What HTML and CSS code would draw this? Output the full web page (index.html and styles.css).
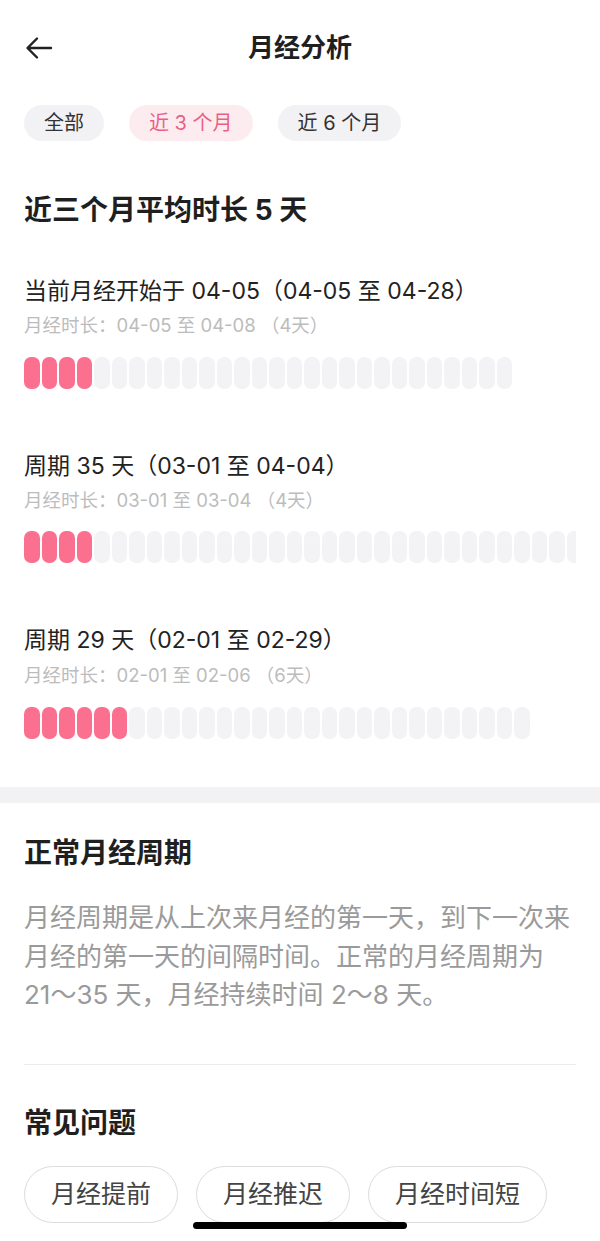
FILE: index.html
```html
<!DOCTYPE html>
<html lang="zh-CN">
<head>
<meta charset="utf-8">
<title>月经分析</title>
<link rel="stylesheet" href="styles.css">
</head>
<body>
<div class="page">
  <header class="topbar">
    <svg class="back" width="28" height="24" viewBox="0 0 28 24" aria-hidden="true">
      <path d="M26 12H3 M12 2.5L2.5 12L12 21.5" fill="none" stroke="#222" stroke-width="2.4" stroke-linecap="round" stroke-linejoin="round"/>
    </svg>
    <h1 class="title">月经分析</h1>
  </header>

  <div class="filters">
    <span class="filter">全部</span>
    <span class="filter active">近 3 个月</span>
    <span class="filter">近 6 个月</span>
  </div>

  <h2 class="avg">近三个月平均时长 5 天</h2>

  <section class="cycle">
    <div class="cycle-title">当前月经开始于 04-05（04-05 至 04-28）</div>
    <div class="cycle-sub">月经时长：04-05 至 04-08 （4天）</div>
    <div class="bars" data-total="28" data-on="4"></div>
  </section>

  <section class="cycle">
    <div class="cycle-title">周期 35 天（03-01 至 04-04）</div>
    <div class="cycle-sub">月经时长：03-01 至 03-04 （4天）</div>
    <div class="bars" data-total="35" data-on="4"></div>
  </section>

  <section class="cycle">
    <div class="cycle-title">周期 29 天（02-01 至 02-29）</div>
    <div class="cycle-sub">月经时长：02-01 至 02-06 （6天）</div>
    <div class="bars" data-total="29" data-on="6"></div>
  </section>
</div>

<div class="band"></div>

<div class="page">
  <h2 class="sec-title first">正常月经周期</h2>
  <p class="desc">月经周期是从上次来月经的第一天，到下一次来月经的第一天的间隔时间。正常的月经周期为 21～35 天，月经持续时间 2～8 天。</p>
  <div class="rule"></div>
  <h2 class="sec-title">常见问题</h2>
  <div class="questions">
    <span class="q">月经提前</span>
    <span class="q">月经推迟</span>
    <span class="q">月经时间短</span>
  </div>
</div>

<div class="home-indicator"></div>

<script src="app.js"></script>
</body>
</html>
```

FILE: styles.css
```css
* { box-sizing: border-box; margin: 0; padding: 0; }

html, body {
  background: #fff;
}

body {
  font-family: "Inter", "Noto Sans CJK SC", sans-serif;
  color: #222;
  width: 600px;
  height: 1241px;
  overflow: hidden;
}

.page {
  padding: 0 24px;
}

.topbar {
  position: relative;
  height: 96px;
  display: flex;
  align-items: center;
  justify-content: center;
}

.back {
  position: absolute;
  left: 1px;
  top: 36px;
}

.title {
  font-size: 26px;
  font-weight: 700;
  line-height: 36px;
  color: #1f1f1f;
}

.filters {
  display: flex;
  gap: 25px;
  margin-top: 9px;
}

.filter {
  height: 36px;
  line-height: 36px;
  padding: 0 20px;
  border-radius: 18px;
  background: #f2f2f4;
  font-size: 20px;
  color: #333;
  white-space: nowrap;
}

.filter.active {
  background: #fdecef;
  color: #ea5f86;
}

.avg {
  margin-top: 51px;
  font-size: 28px;
  line-height: 36px;
  font-weight: 700;
  color: #1f1f1f;
}

.cycle {
  margin-top: 47px;
}

.cycle + .cycle {
  margin-top: 61px;
}

.cycle-title {
  font-size: 23px;
  line-height: 32px;
  color: #222;
  white-space: nowrap;
}

.cycle-sub {
  margin-top: 7px;
  font-size: 18.5px;
  line-height: 22px;
  color: #bcbcbc;
  white-space: nowrap;
}

.cycle:nth-of-type(3) .cycle-sub {
  margin-top: 8px;
}

.bars {
  margin-top: 21px;
  display: flex;
  gap: 2px;
  height: 32px;
  overflow: hidden;
}

.cycle:nth-of-type(2) .bars {
  margin-top: 20px;
}

.cycle:nth-of-type(3) .bars {
  margin-top: 21px;
}

.bar {
  flex: 0 0 15.5px;
  height: 32px;
  border-radius: 7px;
  background: #f3f3f5;
}

.bar.on {
  background: #fb6f8f;
}

.band {
  margin-top: 48px;
  height: 16px;
  background: #f2f2f4;
}

.sec-title {
  margin-top: 39px;
  font-size: 28px;
  line-height: 38px;
  font-weight: 700;
  color: #1f1f1f;
}

.sec-title.first {
  margin-top: 31px;
}

.desc {
  margin-top: 27px;
  font-size: 26px;
  line-height: 38.5px;
  color: #9a9a9a;
}

.rule {
  margin-top: 49px;
  height: 1px;
  background: #ececec;
}

.questions {
  margin-top: 24px;
  display: flex;
  gap: 18px;
}

.q {
  height: 57px;
  line-height: 55px;
  padding: 0 26px;
  border: 1.5px solid #dcdcdc;
  border-radius: 29px;
  font-size: 25px;
  color: #444;
  white-space: nowrap;
}

.home-indicator {
  position: fixed;
  left: 193px;
  top: 1222px;
  width: 214px;
  height: 7px;
  border-radius: 4px;
  background: #000;
}
```

FILE: app.js
```js
document.querySelectorAll('.bars').forEach(function (el) {
  var total = parseInt(el.getAttribute('data-total'), 10);
  var on = parseInt(el.getAttribute('data-on'), 10);
  for (var i = 0; i < total; i++) {
    var b = document.createElement('span');
    b.className = i < on ? 'bar on' : 'bar';
    el.appendChild(b);
  }
});
```
